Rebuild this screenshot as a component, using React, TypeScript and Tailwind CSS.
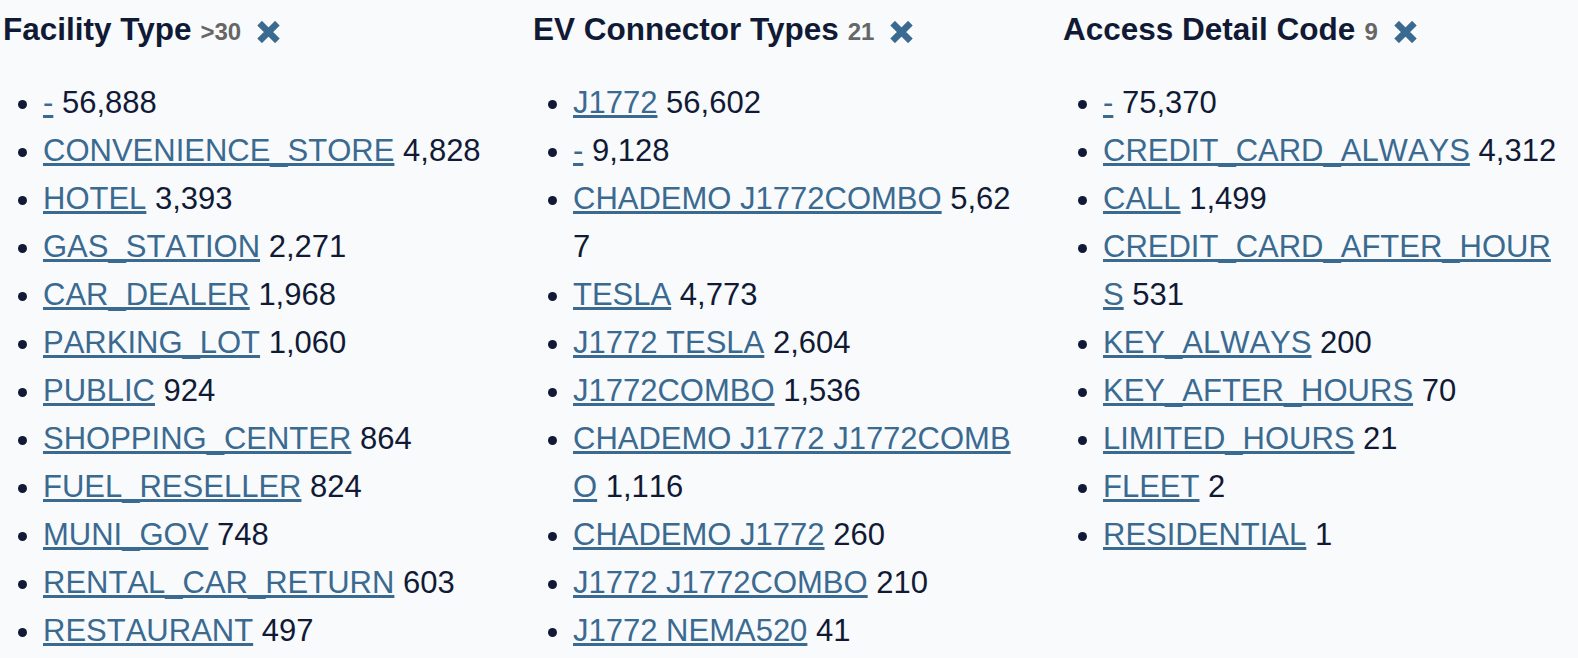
import React from "react";

type Facet = { title: string; count: string; items: [string, string][] };

const facets: Facet[] = [
  {
    title: "Facility Type",
    count: ">30",
    items: [
      ["-", "56,888"],
      ["CONVENIENCE_STORE", "4,828"],
      ["HOTEL", "3,393"],
      ["GAS_STATION", "2,271"],
      ["CAR_DEALER", "1,968"],
      ["PARKING_LOT", "1,060"],
      ["PUBLIC", "924"],
      ["SHOPPING_CENTER", "864"],
      ["FUEL_RESELLER", "824"],
      ["MUNI_GOV", "748"],
      ["RENTAL_CAR_RETURN", "603"],
      ["RESTAURANT", "497"],
    ],
  },
  {
    title: "EV Connector Types",
    count: "21",
    items: [
      ["J1772", "56,602"],
      ["-", "9,128"],
      ["CHADEMO J1772COMBO", "5,627"],
      ["TESLA", "4,773"],
      ["J1772 TESLA", "2,604"],
      ["J1772COMBO", "1,536"],
      ["CHADEMO J1772 J1772COMBO", "1,116"],
      ["CHADEMO J1772", "260"],
      ["J1772 J1772COMBO", "210"],
      ["J1772 NEMA520", "41"],
    ],
  },
  {
    title: "Access Detail Code",
    count: "9",
    items: [
      ["-", "75,370"],
      ["CREDIT_CARD_ALWAYS", "4,312"],
      ["CALL", "1,499"],
      ["CREDIT_CARD_AFTER_HOURS", "531"],
      ["KEY_ALWAYS", "200"],
      ["KEY_AFTER_HOURS", "70"],
      ["LIMITED_HOURS", "21"],
      ["FLEET", "2"],
      ["RESIDENTIAL", "1"],
    ],
  },
];

function Cross() {
  return (
    <svg
      width="23"
      height="22"
      viewBox="0 0 23 22"
      className="inline-block mb-0 ml-[16px]"
      aria-hidden="true"
    >
      <path d="M2.6 2.2 L20.4 19.8 M20.4 2.2 L2.6 19.8" stroke="#3b6a91" strokeWidth="6.6" strokeLinecap="butt" />
    </svg>
  );
}

function FacetColumn({ facet }: { facet: Facet }) {
  return (
    <div className="w-[530px] shrink-0">
      <h3 className="flex items-baseline pt-[9px] text-[31.5px] leading-[40px] font-bold text-[#111a35]">
        <span>{facet.title}</span>
        <span className="ml-[9px] text-[24px] font-bold text-[#666666]">{facet.count}</span>
        <a href="#" className="inline-block">
          <Cross />
        </a>
      </h3>
      <ul className="mt-[26.8px] w-[494px] list-disc pl-[40px] text-[31px] leading-[48px] text-[#111a35] break-all [font-kerning:none]">
        {facet.items.map(([label, n], i) => (
          <li key={i}>
            <a
              href="#"
              className="text-[#3b6a91] underline decoration-[3px] underline-offset-[2px]"
            >
              {label}
            </a>{" "}
            {n}
          </li>
        ))}
      </ul>
    </div>
  );
}

export default function App() {
  return (
    <div className="min-h-screen bg-[#f8fafc] pl-[3px] font-['Liberation_Sans',Arial,sans-serif]">
      <div className="flex">
        {facets.map((f) => (
          <FacetColumn key={f.title} facet={f} />
        ))}
      </div>
    </div>
  );
}
